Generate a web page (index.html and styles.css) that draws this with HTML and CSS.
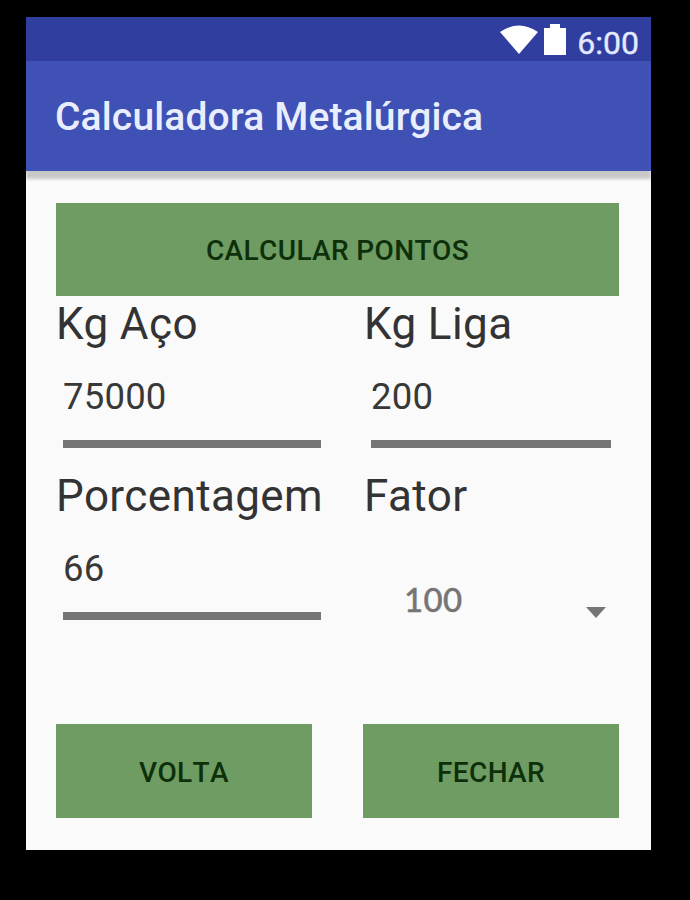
FILE: index.html
```html
<!DOCTYPE html>
<html lang="pt-BR">
<head>
    <meta charset="UTF-8">
    <meta name="viewport" content="width=device-width, initial-scale=1.0">
    <title>Calculadora Metalúrgica</title>
    <link rel="stylesheet" href="styles.css">
</head>
<body>
    <div class="screen">
        <div class="status-bar">
            <svg class="wifi" width="38" height="29" viewBox="0 0 38 29">
                <path d="M0 7 Q19 -6 38 7 L19 29 Z" fill="#fff"/>
            </svg>
            <svg class="battery" width="22" height="31" viewBox="0 0 22 31">
                <path d="M6 0H16V4H22V31H0V4H6Z" fill="#fff"/>
            </svg>
            <span class="clock">6:00</span>
        </div>
        <header class="toolbar">
            <h1>Calculadora Metalúrgica</h1>
        </header>

        <main class="content">
            <button class="btn btn-wide">Calcular pontos</button>

            <div class="fields">
                <div class="field">
                    <label for="aco">Kg Aço</label>
                    <input type="text" id="aco" value="75000">
                </div>
                <div class="field">
                    <label for="liga">Kg Liga</label>
                    <input type="text" id="liga" value="200">
                </div>
                <div class="field">
                    <label for="porcentagem">Porcentagem</label>
                    <input type="text" id="porcentagem" value="66">
                </div>
                <div class="field">
                    <label>Fator</label>
                    <div class="spinner">
                        <span>100</span>
                        <svg width="20" height="11" viewBox="0 0 20 11">
                            <path d="M0 0H20L10 11Z" fill="#757575"/>
                        </svg>
                    </div>
                </div>
            </div>

            <div class="actions">
                <button class="btn">Volta</button>
                <button class="btn">Fechar</button>
            </div>
        </main>
    </div>
</body>
</html>
```
FILE: styles.css
```css
* {
    box-sizing: border-box;
}
body {
    margin: 0;
    padding: 17px 39px 50px 26px;
    height: 900px;
    background-color: #000;
    font-family: Roboto, sans-serif;
    overflow: hidden;
}
.screen {
    height: 833px;
    background-color: #fafafa;
}
.status-bar {
    display: flex;
    justify-content: flex-end;
    height: 44px;
    padding-right: 12px;
    background-color: #303f9f;
    color: #e4e9ff;
}
.wifi {
    margin: 8px 6px 0 0;
}
.battery {
    margin: 7px 11px 0 0;
}
.clock {
    font-size: 32px;
    line-height: 52px;
    height: 44px;
    -webkit-text-stroke: 0.4px #e4e9ff;
}
.toolbar {
    display: flex;
    align-items: center;
    height: 110px;
    padding: 2px 0 0 29px;
    background-color: #3f51b5;
    box-shadow: 0 8px 3px rgba(0, 0, 0, 0.2);
    clip-path: inset(0 0 -12px 0);
}
h1 {
    margin: 0;
    color: #e9eeff;
    font-size: 39px;
    font-weight: 500;
    letter-spacing: 0.15px;
}
.content {
    padding: 32px 32px 0 30px;
}
.btn {
    display: block;
    width: 256px;
    height: 94px;
    padding: 2px 0 0;
    border: none;
    background-color: #6e9c63;
    color: #0d300b;
    font-family: inherit;
    font-size: 28px;
    font-weight: 500;
    font-kerning: none;
    letter-spacing: 0.4px;
    text-transform: uppercase;
}
.btn-wide {
    width: 100%;
    height: 93px;
}
.fields {
    display: grid;
    grid-template-columns: 273px 255px;
    grid-auto-rows: 172px;
    column-gap: 35px;
}
.field {
    display: flex;
    flex-direction: column;
}
label {
    color: #333;
    font-size: 44px;
    line-height: 57px;
    letter-spacing: 0.4px;
}
input {
    height: 87px;
    margin: 8px 8px 0 7px;
    padding: 0 0 8px;
    border: none;
    border-bottom: 8px solid #757575;
    background: none;
    color: #383838;
    font-family: inherit;
    font-size: 36.5px;
    letter-spacing: 0.2px;
    outline: none;
}
.spinner {
    display: flex;
    justify-content: space-between;
    padding: 54px 13px 0 40px;
    color: #757575;
    font-family: Lato, sans-serif;
    font-size: 33px;
    font-weight: 500;
    line-height: 40px;
    letter-spacing: 0.4px;
    -webkit-text-stroke: 0.4px #757575;
}
.spinner svg {
    margin-top: 28px;
}
.actions {
    display: flex;
    justify-content: space-between;
    margin-top: 84px;
}
```
